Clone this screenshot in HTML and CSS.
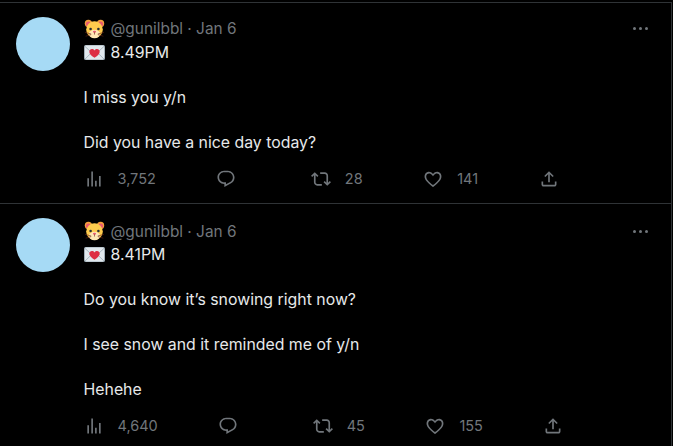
FILE: index.html
```html
<!DOCTYPE html>
<html lang="en">
<head>
<meta charset="utf-8">
<title>Tweets</title>
<link rel="stylesheet" href="styles.css">
</head>
<body>
<svg class="defs" width="0" height="0" aria-hidden="true">
  <defs>
    <symbol id="hamster" viewBox="0 0 36 36">
      <circle cx="7" cy="8" r="6.500" fill="#f4a03c"/>
      <circle cx="29" cy="8" r="6.500" fill="#f4a03c"/>
      <circle cx="7" cy="9" r="4.500" fill="#e8596e"/><circle cx="29" cy="9" r="4.500" fill="#e8596e"/>
      <ellipse cx="18" cy="19" rx="15" ry="15" fill="#ffcc4d"/>
      <ellipse cx="18" cy="27" rx="10" ry="7.500" fill="#ffe8b6"/>
      <circle cx="11" cy="18" r="2.300" fill="#292f33"/><circle cx="25" cy="18" r="2.300" fill="#292f33"/>
      <ellipse cx="18" cy="23" rx="2.800" ry="1.800" fill="#e75a70"/>
      <path d="M18 24v4M1 24l11 3M2 31l10-3M35 24l-11 3M34 31l-10-3" stroke="#662113" stroke-width="1.100" fill="none"/>
    </symbol>
    <symbol id="letter" viewBox="0 0 36 26">
      <rect x="0" y="0" width="36" height="26" rx="3" fill="#99aab5"/>
      <rect x="1" y="1" width="34" height="24" rx="2" fill="#e1e8ed"/>
      <path d="M1 2l13 12M35 2L22 14M1 25l12-12M35 25L23 13" stroke="#99aab5" stroke-width="1.400" fill="none"/>
      <path d="M18 22c-6-4-9-7-9-10.500 0-5 6.500-6 9-2 2.500-4 9-3 9 2 0 3.500-3 6.500-9 10.500z" fill="#dd2e44"/>
    </symbol>
    <symbol id="views" viewBox="0 0 24 24">
      <path d="M8.750 21V3h2v18h-2zM18 21V8.500h2V21h-2zM4 21l.004-10h2L6 21H4zm9.248 0v-7h2v7h-2z" fill="currentColor"/>
    </symbol>
    <symbol id="reply" viewBox="0 0 24 24">
      <path d="M1.751 10c0-4.420 3.584-8 8.005-8h4.366c4.490 0 8.129 3.640 8.129 8.130 0 2.960-1.607 5.680-4.196 7.110l-8.054 4.460v-3.690h-.067c-4.490.1-8.183-3.510-8.183-8.010zm8.005-6c-3.317 0-6.005 2.690-6.005 6 0 3.370 2.770 6.080 6.138 6.010l.351-.01h1.761v2.300l5.087-2.810c1.951-1.080 3.163-3.130 3.163-5.360 0-3.390-2.744-6.130-6.129-6.130H9.756z" fill="currentColor"/>
    </symbol>
    <symbol id="retweet" viewBox="0 0 24 24">
      <path d="M4.500 3.880l4.432 4.140-1.364 1.460L5.500 7.550V16c0 1.100.896 2 2 2H13v2H7.500c-2.209 0-4-1.790-4-4V7.550L1.432 9.480.068 8.020 4.500 3.880zM16.500 6H11V4h5.500c2.209 0 4 1.790 4 4v8.450l2.068-1.930 1.364 1.460-4.432 4.140-4.432-4.140 1.364-1.460 2.068 1.930V8c0-1.100-.896-2-2-2z" fill="currentColor"/>
    </symbol>
    <symbol id="like" viewBox="0 0 24 24">
      <path d="M12 21.600l-.6-.41c-1.410-.97-2.920-2.190-4.200-3.350C4.740 15.590 2.980 13.460 2.240 11.240 1.580 9.340 1.770 7.480 2.610 6 3.480 4.490 5 3.520 6.700 3.400 8.600 3.250 10.500 4.100 12 5.960c1.500-1.860 3.400-2.710 5.300-2.560 1.700.12 3.220 1.090 4.090 2.600.84 1.480 1.030 3.340.37 5.240-.74 2.220-2.500 4.350-4.960 6.600-1.280 1.160-2.790 2.380-4.200 3.350l-.6.410zM7.200 5.400c-1.240.07-2.250.72-2.840 1.750-.5.880-.7 2.080-.2 3.590.6 1.780 2.100 3.700 4.400 5.800 1 .9 2.200 1.900 3.440 2.800 1.240-.9 2.440-1.900 3.440-2.800 2.300-2.100 3.800-4.020 4.400-5.800.5-1.510.3-2.710-.2-3.590-.59-1.030-1.600-1.680-2.840-1.750-1.220-.06-2.680.51-3.890 2.160L12 8.750l-.91-1.190C9.880 5.910 8.420 5.340 7.200 5.400z" fill="currentColor"/>
    </symbol>
    <symbol id="share" viewBox="0 0 24 24">
      <path d="M12 2.590l5.700 5.700-1.410 1.420L13 6.410V16h-2V6.410l-3.300 3.300-1.410-1.420L12 2.590zM21 15l-.02 3.510c0 1.380-1.120 2.490-2.500 2.490H5.500C4.110 21 3 19.880 3 18.500V15h2v3.500c0 .280.220.5.5.5h12.980c.280 0 .5-.220.500-.5L19 15h2z" fill="currentColor"/>
    </symbol>
  </defs>
</svg>
<main class="timeline">
  <article class="tweet">
    <div class="avatar"></div>
    <div class="content">
      <header class="head">
        <svg class="emoji"><use href="#hamster"/></svg>
        <span class="meta">@gunilbbl · Jan 6</span>
        <span class="more"><i></i><i></i><i></i></span>
      </header>
      <p class="line"><svg class="emoji letter"><use href="#letter"/></svg>8.49PM</p>
      <p class="line gap">I miss you y/n</p>
      <p class="line gap">Did you have a nice day today?</p>
      <footer class="actions">
        <span class="act views"><svg class="ico"><use href="#views"/></svg>3,752</span>
        <span class="act reply"><svg class="ico"><use href="#reply"/></svg></span>
        <span class="act rt"><svg class="ico"><use href="#retweet"/></svg>28</span>
        <span class="act like"><svg class="ico"><use href="#like"/></svg>141</span>
        <span class="act share"><svg class="ico"><use href="#share"/></svg></span>
      </footer>
    </div>
  </article>
  <article class="tweet">
    <div class="avatar"></div>
    <div class="content">
      <header class="head">
        <svg class="emoji"><use href="#hamster"/></svg>
        <span class="meta">@gunilbbl · Jan 6</span>
        <span class="more"><i></i><i></i><i></i></span>
      </header>
      <p class="line"><svg class="emoji letter"><use href="#letter"/></svg>8.41PM</p>
      <p class="line gap">Do you know it’s snowing right now?</p>
      <p class="line gap">I see snow and it reminded me of y/n</p>
      <p class="line gap">Hehehe</p>
      <footer class="actions">
        <span class="act views"><svg class="ico"><use href="#views"/></svg>4,640</span>
        <span class="act reply"><svg class="ico"><use href="#reply"/></svg></span>
        <span class="act rt"><svg class="ico"><use href="#retweet"/></svg>45</span>
        <span class="act like"><svg class="ico"><use href="#like"/></svg>155</span>
        <span class="act share"><svg class="ico"><use href="#share"/></svg></span>
      </footer>
    </div>
  </article>
</main>
</body>
</html>
```
FILE: styles.css
```css
* { box-sizing: border-box; }
html, body { margin: 0; height: 100%; background: #000; overflow: hidden; }
body { font-family: Inter, "Liberation Sans", Arial, sans-serif; color: #e7e9ea; }
.defs { position: absolute; }
.timeline { width: 672px; height: 446px; margin-top: 2px; border-right: 1px solid #2f3336; }
.tweet { display: flex; border-top: 1px solid #2f3336; padding: 14px 0 0 16px; height: 201px; }
.tweet + .tweet { height: 243px; }
.tweet + .tweet .head { height: 25.500px; padding-top: 2px; }
.avatar { flex: none; width: 54px; height: 54px; border-radius: 50%; background: #a6daf5; }
.content { flex: 1; margin-left: 13.500px; padding-right: 24px; }
.head { display: flex; align-items: center; height: 24.500px; padding-bottom: 1.500px; }
.emoji { width: 21px; height: 20px; flex: none; }
.meta { margin-left: 6px; font-size: 15.400px; color: #71767b; }
.more { margin-left: auto; margin-right: -1px; display: flex; gap: 3px; }
.more i { width: 3px; height: 3px; border-radius: 50%; background: #71767b; }
.line { margin: 0; height: 22.500px; line-height: 22.500px; font-size: 15.850px; display: flex; align-items: center; }
.line.gap { margin-top: 22.500px; }
.letter { height: 15px; width: 21px; margin-right: 6px; }
.actions { display: flex; gap: 60.500px; align-items: center; height: 22px; margin-top: 13.500px; color: #71767b; font-size: 14.500px; }
.act { display: flex; align-items: center; gap: 14px; }
.reply { margin-right: 14px; }
.ico { width: 20px; height: 20px; flex: none; }
```
